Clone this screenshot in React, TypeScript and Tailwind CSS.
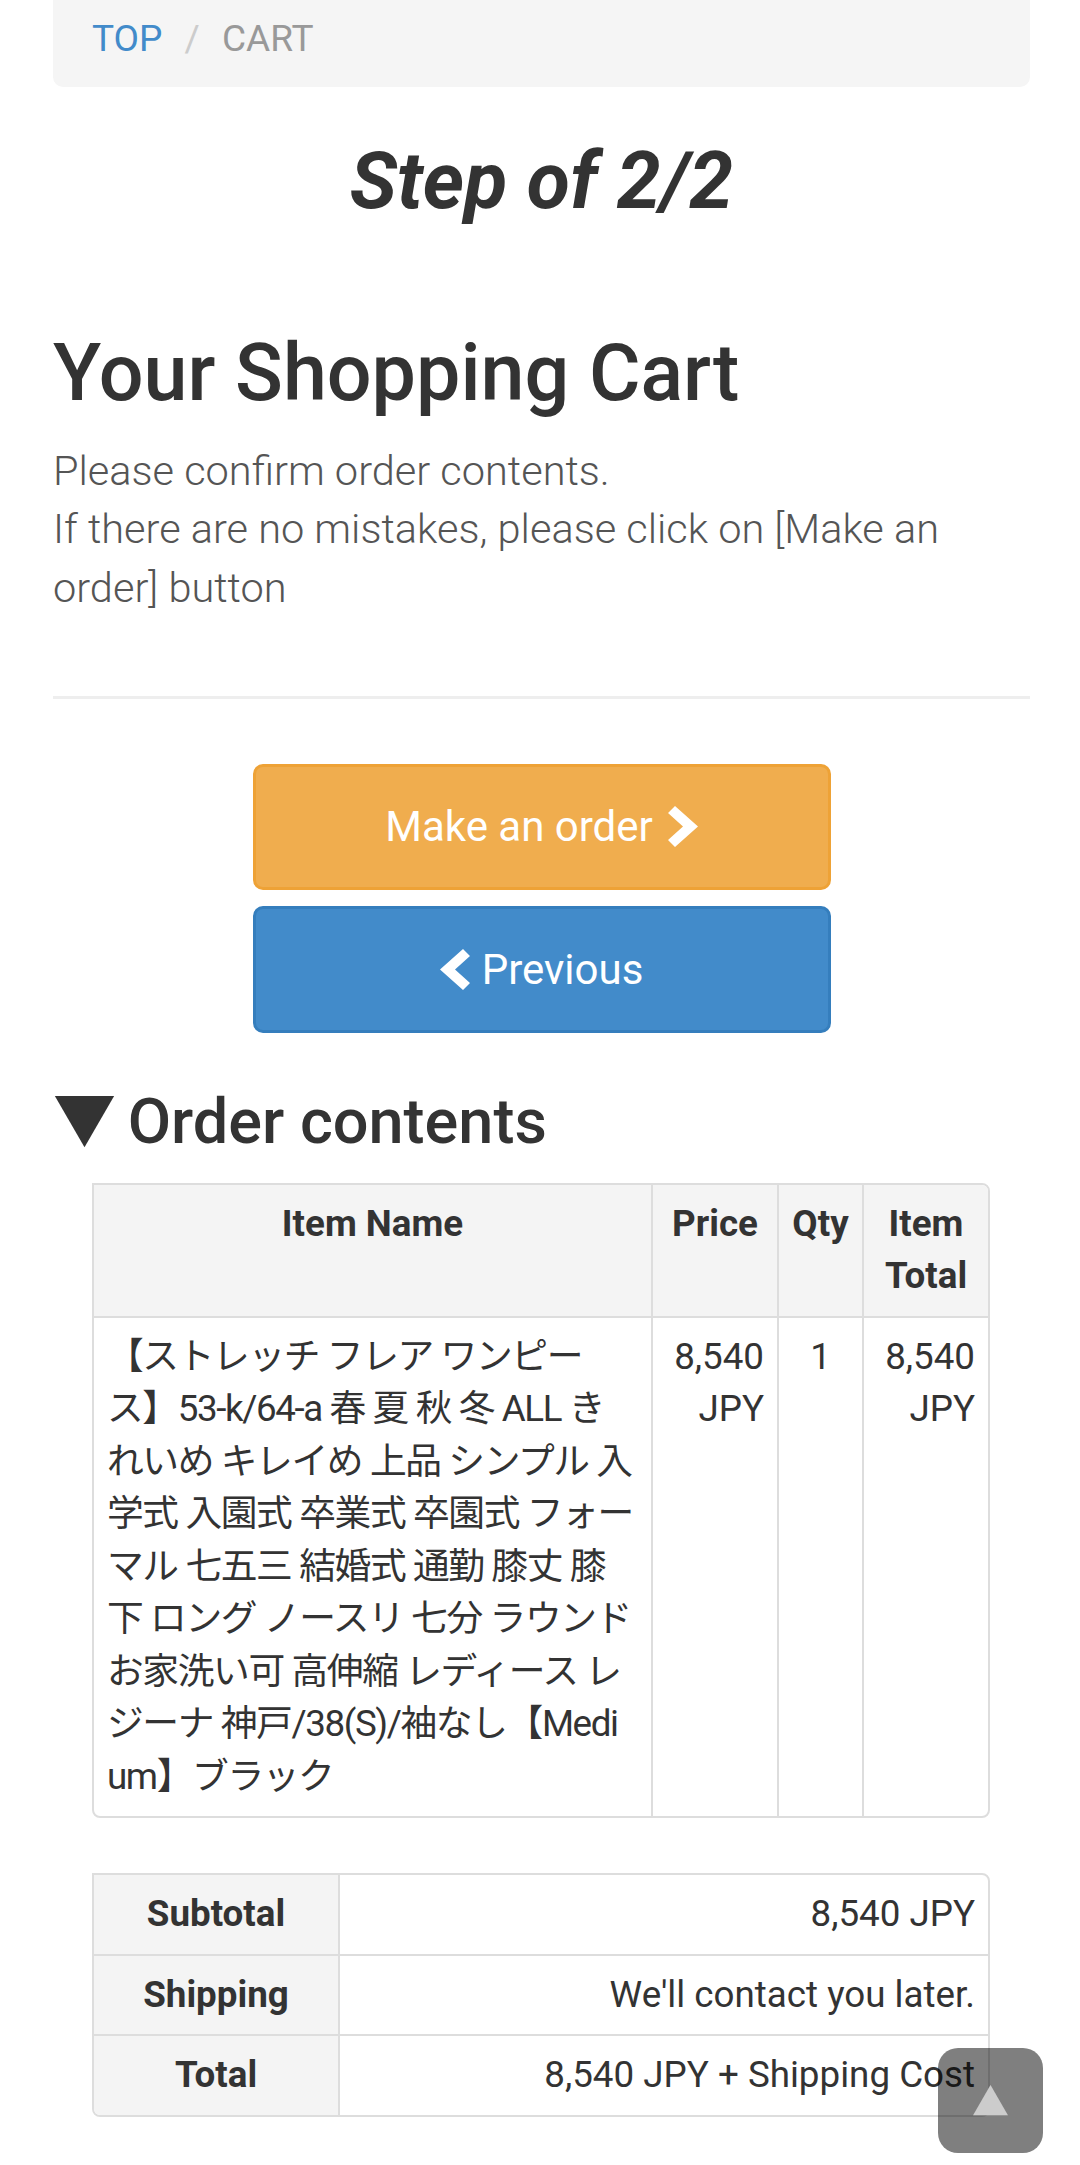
import React from "react";

const itemNameLines = [
  "【ストレッチ フレア ワンピー",
  "ス】53-k/64-a 春 夏 秋 冬 ALL き",
  "れいめ キレイめ 上品 シンプル 入",
  "学式 入園式 卒業式 卒園式 フォー",
  "マル 七五三 結婚式 通勤 膝丈 膝",
  "下 ロング ノースリ 七分 ラウンド",
  "お家洗い可 高伸縮 レディース レ",
  "ジーナ 神戸/38(S)/袖なし【Medi",
  "um】ブラック",
];

const summary = [
  { label: "Subtotal", value: "8,540 JPY" },
  { label: "Shipping", value: "We'll contact you later." },
  { label: "Total", value: "8,540 JPY + Shipping Cost" },
];

function ChevronRight() {
  return (
    <svg width="30" height="41" viewBox="0 0 30 41" className="shrink-0">
      <polygon points="7,0 30,20.5 7,41 0,34 15,20.5 0,7" fill="#fff" />
    </svg>
  );
}

function ChevronLeft() {
  return (
    <svg width="30" height="41" viewBox="0 0 30 41" className="shrink-0">
      <polygon points="23,0 0,20.5 23,41 30,34 15,20.5 30,7" fill="#fff" />
    </svg>
  );
}

function Breadcrumb() {
  return (
    <div className="rounded-b-[10px] bg-[#f5f5f5] px-[39px] pt-[13px] pb-[21px] text-[37px] leading-[52.5px]">
      <a className="text-[#428bca]">TOP</a>{" "}
      <span className="px-[13px] text-[#cccccc]">/{"\u00a0"}</span>
      <span className="text-[#999999]">CART</span>
    </div>
  );
}

function OrderTable() {
  const cell = "border-l-2 border-[#dddddd] p-[13px] align-top";
  return (
    <div className="mt-[27px] ml-[39px] w-[898px] overflow-hidden rounded-tr-[8px] rounded-b-[8px] border-2 border-[#dddddd]">
      <table className="w-full table-fixed border-collapse text-[36.75px] leading-[52.5px]">
        <colgroup>
          <col className="w-[558px]" />
          <col className="w-[126px]" />
          <col className="w-[85px]" />
          <col />
        </colgroup>
        <thead className="bg-[#f4f4f4]">
          <tr>
            <th className="p-[13px] text-center align-top font-bold">Item Name</th>
            <th className={`${cell} text-center font-bold`}>Price</th>
            <th className={`${cell} text-center font-bold`}>Qty</th>
            <th className={`${cell} text-center font-bold`}>Item Total</th>
          </tr>
        </thead>
        <tbody>
          <tr className="border-t-2 border-[#dddddd]">
            <td className="p-[13px] align-top tracking-[-1.4px]">
              {itemNameLines.map((line, i) => (
                <span key={i} className="block whitespace-nowrap">
                  {line}
                </span>
              ))}
            </td>
            <td className={`${cell} text-right`}>8,540 JPY</td>
            <td className={`${cell} text-center`}>1</td>
            <td className={`${cell} text-right`}>8,540 JPY</td>
          </tr>
        </tbody>
      </table>
    </div>
  );
}

function SummaryTable() {
  return (
    <div className="mt-[55px] ml-[39px] w-[898px] overflow-hidden rounded-tr-[8px] rounded-b-[8px] border-2 border-[#dddddd]">
      <table className="w-full table-fixed border-collapse text-[36.75px] leading-[52.5px]">
        <colgroup>
          <col className="w-[245px]" />
          <col />
        </colgroup>
        <tbody>
          {summary.map((row, i) => (
            <tr key={row.label} className={i > 0 ? "border-t-2 border-[#dddddd]" : ""}>
              <th className="bg-[#f4f4f4] p-[13px] text-center font-bold">{row.label}</th>
              <td className="border-l-2 border-[#dddddd] p-[13px] text-right">{row.value}</td>
            </tr>
          ))}
        </tbody>
      </table>
    </div>
  );
}

export default function App() {
  return (
    <div className="min-h-screen bg-white pr-[50px] pb-[50px] pl-[53px] font-[Roboto,'Noto_Sans_CJK_JP',sans-serif] text-[#333333]">
      <Breadcrumb />

      <h2 className="mt-[51px] text-center text-[79px] leading-[87px] font-bold italic">Step of 2/2</h2>

      <h2 className="mt-[105px] text-[79px] leading-[87px] font-medium">Your Shopping Cart</h2>
      <p className="mt-[25px] text-[41.5px] leading-[58.5px] font-light text-[#555555]">
        Please confirm order contents.
        <br />
        If there are no mistakes, please click on [Make an order] button
      </p>

      <hr className="mt-[79px] border-t-[3px] border-[#eeeeee]" />

      <div className="mx-auto mt-[64.5px] flex w-[578px] flex-col gap-[16px]">
        <button className="flex h-[126px] items-center justify-center gap-[15px] rounded-[10px] border-[3px] border-[#eea236] bg-[#f0ad4e] text-[42px] text-white">
          Make an order
          <ChevronRight />
        </button>
        <button className="flex h-[127px] items-center justify-center gap-[12px] rounded-[10px] border-[3px] border-[#357ebd] bg-[#428bca] text-[42px] text-white">
          <ChevronLeft />
          Previous
        </button>
      </div>

      <h3 className="mt-[54px] text-[63px] leading-[69.3px] font-medium">
        <span className="mr-[-4px] font-['Noto_Sans_CJK_JP'] leading-[0px]">▼</span> Order contents
      </h3>

      <OrderTable />
      <SummaryTable />

      <a className="fixed right-[37px] bottom-[12px] flex h-[105px] w-[105px] items-center justify-center rounded-[20px] bg-black/50 font-['Noto_Sans_CJK_JP'] text-[37px] leading-none text-[#cccccc]">
        ▲
      </a>
    </div>
  );
}
